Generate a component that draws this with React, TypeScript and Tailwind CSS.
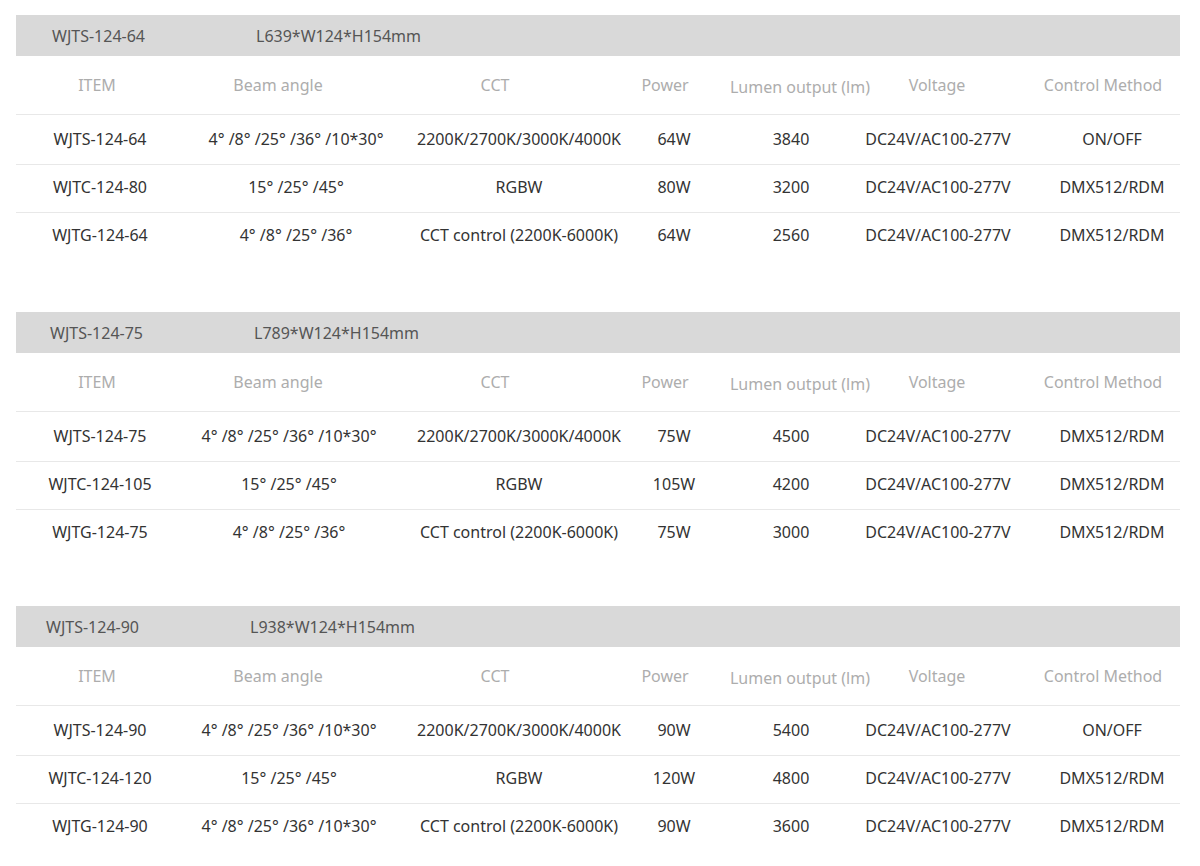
import React from "react";

type Row = string[];
type Section = { model: string; size: string; pad: string; rows: Row[]; gapAfter: string; beam: string };

const sections: Section[] = [
  {
    model: "WJTS-124-64",
    size: "L639*W124*H154mm",
    pad: "pl-[36px]",
    gapAfter: "mb-[52px]",
    beam: "",
    rows: [
      ["WJTS-124-64", "4° /8° /25° /36° /10*30°", "2200K/2700K/3000K/4000K", "64W", "3840", "DC24V/AC100-277V", "ON/OFF"],
      ["WJTC-124-80", "15° /25° /45°", "RGBW", "80W", "3200", "DC24V/AC100-277V", "DMX512/RDM"],
      ["WJTG-124-64", "4° /8° /25° /36°", "CCT control (2200K-6000K)", "64W", "2560", "DC24V/AC100-277V", "DMX512/RDM"],
    ],
  },
  {
    model: "WJTS-124-75",
    size: "L789*W124*H154mm",
    pad: "pl-[34px]",
    gapAfter: "mb-[49px]",
    beam: " pr-[14px]",
    rows: [
      ["WJTS-124-75", "4° /8° /25° /36° /10*30°", "2200K/2700K/3000K/4000K", "75W", "4500", "DC24V/AC100-277V", "DMX512/RDM"],
      ["WJTC-124-105", "15° /25° /45°", "RGBW", "105W", "4200", "DC24V/AC100-277V", "DMX512/RDM"],
      ["WJTG-124-75", "4° /8° /25° /36°", "CCT control (2200K-6000K)", "75W", "3000", "DC24V/AC100-277V", "DMX512/RDM"],
    ],
  },
  {
    model: "WJTS-124-90",
    size: "L938*W124*H154mm",
    pad: "pl-[30px]",
    gapAfter: "mb-0",
    beam: " pr-[14px]",
    rows: [
      ["WJTS-124-90", "4° /8° /25° /36° /10*30°", "2200K/2700K/3000K/4000K", "90W", "5400", "DC24V/AC100-277V", "ON/OFF"],
      ["WJTC-124-120", "15° /25° /45°", "RGBW", "120W", "4800", "DC24V/AC100-277V", "DMX512/RDM"],
      ["WJTG-124-90", "4° /8° /25° /36° /10*30°", "CCT control (2200K-6000K)", "90W", "3600", "DC24V/AC100-277V", "DMX512/RDM"],
    ],
  },
];

const headers = ["ITEM", "Beam angle", "CCT", "Power", "Lumen output (lm)", "Voltage", "Control Method"];
const rowStyles = ["h-[50px] pb-[2px]", "h-[48px] pb-[4px]", "h-[47px] pb-[4px]"];

function HeaderRow() {
  return (
    <div className="grid grid-cols-[162px_200px_234px_106px_164px_110px_188px] h-[59px] border-b border-[#e8e8e8] items-center text-[#adadad]">
      {headers.map((h, i) => (
        <div key={h} className={"text-center whitespace-nowrap " + (i === 4 ? "pt-[4px]" : "") + (i === 6 ? " pl-[34px]" : "")}>
          {h}
        </div>
      ))}
    </div>
  );
}

function DataRow({ row, idx, beam }: { row: Row; idx: number; beam: string }) {
  return (
    <div
      className={
        "grid grid-cols-[168px_224px_222px_88px_146px_148px_168px] items-center text-[#333333] " +
        rowStyles[idx] +
        (idx < 2 ? " border-b border-[#e8e8e8]" : "")
      }
    >
      {row.map((c, i) => (
        <div key={i} className={"text-center whitespace-nowrap" + (i === 6 ? " pl-[32px]" : "") + (i === 1 ? beam : "")}>
          {c}
        </div>
      ))}
    </div>
  );
}

export default function App() {
  return (
    <div
      className="w-[1200px] h-[866px] bg-white pl-[16px] pr-[20px] pt-[15px] text-[16px] overflow-hidden"
      style={{ fontFamily: '"Noto Sans", "Open Sans", sans-serif' }}
    >
      {sections.map((s) => (
        <div key={s.model} className={s.gapAfter}>
          <div className={"flex items-center h-[41px] bg-[#d9d9d9] text-[#555555] " + s.pad}>
            <span className="w-[204px] whitespace-nowrap">{s.model}</span>
            <span className="whitespace-nowrap">{s.size}</span>
          </div>
          <HeaderRow />
          {s.rows.map((r, i) => (
            <DataRow key={i} row={r} idx={i} beam={s.beam} />
          ))}
        </div>
      ))}
    </div>
  );
}
